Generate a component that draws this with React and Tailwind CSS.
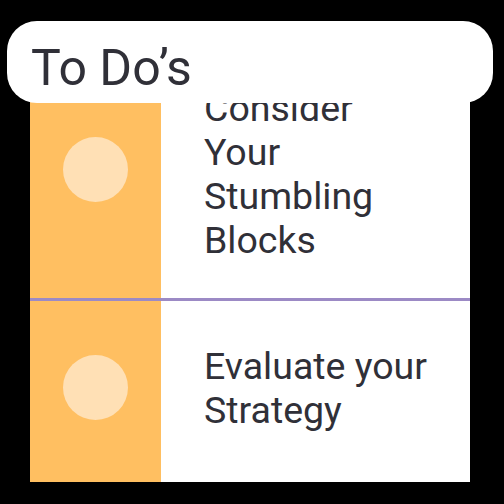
import React from 'react';

// row heights and paddings picked to line up with the scrolled list
const todos = [
  { id: 1, text: 'Consider Your Stumbling Blocks', h: 'h-[242px]', dotPad: 'pt-[78px]', textPad: 'pt-[27px]' },
  { id: 2, text: 'Evaluate your Strategy', h: 'h-[181px]', dotPad: 'pt-[54px]', textPad: 'pt-[43px]' },
];

const TodoRow = ({ item, last }) => (
  <div className={`flex ${item.h} ${last ? '' : 'border-b-[3px] border-[#9c8ac5]'}`}>
    <div className={`w-[131px] shrink-0 bg-[#ffbf61] flex justify-center ${item.dotPad}`}>
      <div className="w-[65px] h-[65px] rounded-full bg-[#ffe0b5]" />
    </div>
    <div className={`flex-1 pl-[43px] pr-[38px] ${item.textPad}`}>
      <p className="text-[37.5px] leading-[44px] text-[#303038]">{item.text}</p>
    </div>
  </div>
);

export default function App() {
  return (
    <div className="w-[504px] h-[504px] bg-black overflow-hidden" style={{ fontFamily: 'Roboto, sans-serif' }}>
      {/* header sits over the top of the list */}
      <div className="relative z-10 ml-[7px] mt-[21px] w-[486px] h-[82px] rounded-[30px] bg-white pl-[24px] pt-[22px]">
        <h1 className="text-[50px] leading-[50px] text-[#303038] font-normal">To Do’s</h1>
      </div>
      <div className="ml-[30px] -mt-[44px] w-[440px] h-[423px] bg-white overflow-hidden">
        {todos.map((t, i) => (
          <TodoRow key={t.id} item={t} last={i === todos.length - 1} />
        ))}
      </div>
    </div>
  );
}
